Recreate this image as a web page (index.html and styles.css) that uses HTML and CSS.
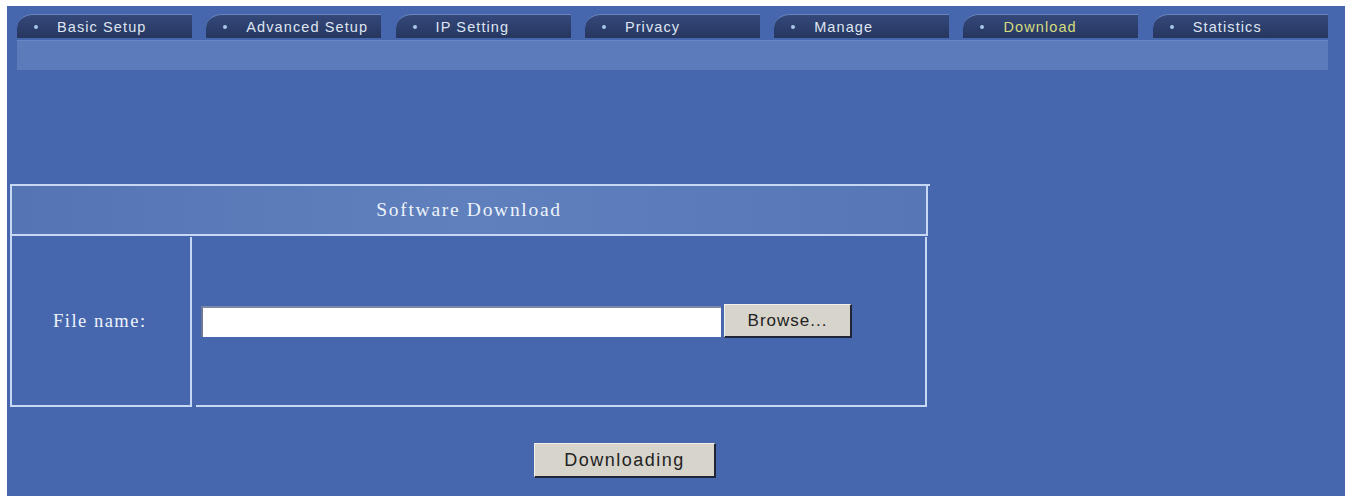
FILE: index.html
```html
<!DOCTYPE html>
<html lang="en">
<head>
    <meta charset="UTF-8">
    <title>Software Download</title>
    <link rel="stylesheet" href="styles.css">
</head>
<body>
    <div class="panel">
        <ul class="tabs">
            <li class="tab"><span class="dot"></span>Basic Setup</li>
            <li class="tab"><span class="dot"></span>Advanced Setup</li>
            <li class="tab"><span class="dot"></span>IP Setting</li>
            <li class="tab"><span class="dot"></span>Privacy</li>
            <li class="tab"><span class="dot"></span>Manage</li>
            <li class="tab active"><span class="dot"></span>Download</li>
            <li class="tab"><span class="dot"></span>Statistics</li>
        </ul>
        <div class="substrip"></div>

        <div class="dl-table">
            <div class="dl-head">Software Download</div>
            <div class="dl-row">
                <div class="dl-label">File name:</div>
                <div class="dl-field">
                    <input type="text" class="file-input">
                    <button class="btn browse">Browse...</button>
                </div>
            </div>
        </div>

        <div class="actions">
            <button class="btn download">Downloading</button>
        </div>
    </div>
</body>
</html>
```

FILE: styles.css
```css
:root {
    --panel-blue: #4667ad;
    --strip-blue: #5b7bbb;
    --tab-dark: #2b3c69;
    --line: #c6d8f3;
}

body {
    margin: 0;
    background-color: #ffffff;
    font-family: 'Liberation Sans', Arial, sans-serif;
}

.panel {
    margin: 6px 3px 2px 7px;
    height: 490px;
    padding-top: 8px;
    box-sizing: border-box;
    background-color: var(--panel-blue);
}

.tabs {
    list-style: none;
    margin: 0;
    padding: 0 0 0 10px;
    display: flex;
    gap: 14.3px;
}

.tab {
    position: relative;
    width: 175px;
    height: 24px;
    box-sizing: border-box;
    padding-left: 40px;
    display: flex;
    align-items: center;
    background: linear-gradient(#34487a, #26365f);
    border-top: 1px solid #6a84bd;
    border-top-left-radius: 16px 14px;
    color: #dfe5f2;
    font-size: 14.5px;
    letter-spacing: 1.1px;
}

.tab.active {
    color: #d6dd7e;
}

.dot {
    position: absolute;
    left: 17px;
    top: 10px;
    width: 4px;
    height: 4px;
    border-radius: 50%;
    background-color: #a9c7e6;
}

.substrip {
    margin: 2px 17px 0 10px;
    height: 30px;
    background-color: var(--strip-blue);
    border-top: 1px solid #6886c4;
    box-sizing: border-box;
}

.dl-table {
    margin: 114px 0 0 3px;
    width: 920px;
    border-top: 2px solid var(--line);
    border-left: 2px solid var(--line);
    box-sizing: border-box;
}

.dl-head {
    height: 48px;
    margin-right: 2px;
    display: flex;
    align-items: center;
    justify-content: center;
    background: linear-gradient(90deg, #5574b4, #5f80bd 50%, #5676b6);
    border-right: 2px solid var(--line);
    border-bottom: 2px solid var(--line);
    color: #eef3fb;
    font-family: 'Liberation Serif', 'Times New Roman', serif;
    font-size: 19.5px;
    letter-spacing: 1.7px;
}

.dl-row {
    display: flex;
    height: 170px;
    margin-top: 1px;
}

.dl-label {
    width: 180px;
    display: flex;
    align-items: center;
    padding-left: 41px;
    box-sizing: border-box;
    border-right: 2px solid var(--line);
    border-bottom: 2px solid var(--line);
    color: #eef3fb;
    font-family: 'Liberation Serif', 'Times New Roman', serif;
    font-size: 18.5px;
    letter-spacing: 1.5px;
}

.dl-field {
    flex: 1;
    margin: 0 3px 0 4px;
    display: flex;
    align-items: center;
    gap: 3px;
    padding-left: 5px;
    border-right: 2px solid var(--line);
    border-bottom: 2px solid var(--line);
}

.file-input {
    width: 520px;
    height: 31px;
    box-sizing: border-box;
    margin: 0;
    background-color: #ffffff;
    border: none;
    border-top: 2px solid #7d8aa6;
    border-left: 2px solid #6c7894;
}

.btn {
    margin: 0;
    background-color: #d7d4cc;
    border-top: 1px solid #f2f0ea;
    border-left: 1px solid #f2f0ea;
    border-right: 2px solid #1f2437;
    border-bottom: 2px solid #1f2437;
    color: #222222;
    font-family: 'Liberation Sans', Arial, sans-serif;
    cursor: pointer;
}

.browse {
    width: 128px;
    height: 34px;
    font-size: 17px;
    letter-spacing: 1px;
}

.actions {
    padding: 36px 0 0 527px;
}

.download {
    width: 182px;
    height: 35px;
    font-size: 18px;
    letter-spacing: 1.5px;
}
```
